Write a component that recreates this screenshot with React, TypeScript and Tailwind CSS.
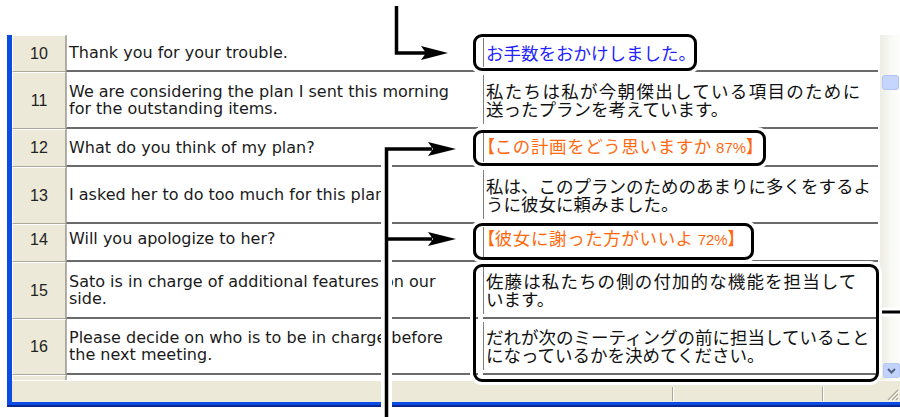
import React from "react";

type RowProps = {
  n: number;
  h: string;
  en: React.ReactNode;
  ja: React.ReactNode;
  up?: boolean;
};

function GridRow({ n, h, en, ja, up }: RowProps) {
  return (
    <div className={`flex ${h}`}>
      <div
        className={`w-[54px] shrink-0 flex items-center justify-center bg-[#ece9d8] border-l border-l-white border-t border-t-white border-b border-b-[#aca899] border-r border-r-[#aca899] font-['Liberation_Sans',sans-serif] text-[16px] text-[#222] ${up ? "pb-[7px]" : ""}`}
      >
        {n}
      </div>
      <div
        className={`w-[412px] shrink-0 flex items-center border-l border-l-[#b3b3b3] border-b-2 border-b-[#6b6b6b] pl-[2px] font-['DejaVu_Sans',sans-serif] text-[16px] leading-[17px] text-[#1a1a1a] ${up ? "pb-[7px]" : ""}`}
      >
        <div className="whitespace-nowrap">{en}</div>
      </div>
      <div className="w-[2px] shrink-0" />
      <div className="w-[398px] shrink-0 pl-[3px] flex">
        <div className="flex-1 flex items-stretch border-b-2 border-b-[#6b6b6b]">
          <div className="w-px bg-[#7d7d7d] my-[3px] shrink-0" />
          <div
            className={`flex items-center pl-[2px] font-['Noto_Sans_CJK_JP',sans-serif] text-[17.5px] leading-[18px] text-[#111] whitespace-nowrap ${up ? "pb-[7px]" : ""}`}
          >
            <div>{ja}</div>
          </div>
        </div>
      </div>
    </div>
  );
}

function Scrollbar() {
  return (
    <div className="w-[20px] h-[345px] shrink-0 flex flex-col bg-linear-to-r from-[#ecebe4] via-[#f8f8f4] to-[#fdfdfb]">
      <div className="mt-[40px] ml-[2px] w-[17px] h-[15px] rounded-[3px] bg-[#c6d5fc] border border-[#afc3f4]" />
      <div className="flex-1" />
      <div className="mb-[2px] ml-[3px] w-[17px] h-[15px] rounded-[2px] bg-[#c3d2fb] border border-[#b7c9f5] flex items-center justify-center">
        <svg width="9" height="6" viewBox="0 0 9 6">
          <path d="M1 1 L4.5 4.5 L8 1" fill="none" stroke="#4d6185" strokeWidth="2" />
        </svg>
      </div>
    </div>
  );
}

function StatusBar() {
  return (
    <div className="h-[22px] flex bg-[#ece9d8] border-t border-t-white">
      <div className="w-[660px] shrink-0" />
      <div className="w-[2px] shrink-0 mt-[6px] mb-[1px] border-l border-l-[#aca899] border-r border-r-white" />
      <div className="w-[148px] shrink-0" />
      <div className="w-[2px] shrink-0 mt-[6px] mb-[1px] border-l border-l-[#aca899] border-r border-r-white" />
      <div className="flex-1 flex items-end justify-end pr-[1px] pb-[1px]">
        <svg width="13" height="13" viewBox="0 0 13 13">
          <path d="M12 2 L2 12 M12 6 L6 12 M12 10 L10 12" stroke="#aca899" strokeWidth="1.2" />
          <path d="M13 3 L3 13 M13 7 L7 13 M13 11 L11 13" stroke="#ffffff" strokeWidth="1" />
        </svg>
      </div>
    </div>
  );
}

export default function App() {
  return (
    <div className="w-[900px] h-[417px] overflow-hidden bg-white relative">
      <div className="pt-[35px] pl-[7px]">
        <div className="flex">
          <div className="w-[5px] shrink-0 bg-[#0a4be3]" />
          <div className="w-[888px] shrink-0 flex flex-col">
            <div className="flex">
              <div className="w-[866px] shrink-0 flex flex-col">
                <GridRow
                  n={10}
                  h="h-[37px]"
                  en="Thank you for your trouble."
                  ja={<span className="text-[#2323ff]">お手数をおかけしました。</span>}
                />
                <GridRow
                  n={11}
                  h="h-[57px]"
                  en={
                    <>
                      <div>We are considering the plan I sent this morning</div>
                      <div>for the outstanding items.</div>
                    </>
                  }
                  ja={
                    <>
                      <div className="tracking-[1.3px]">私たちは私が今朝傑出している項目のために</div>
                      <div>送ったプランを考えています。</div>
                    </>
                  }
                />
                <GridRow
                  n={12}
                  h="h-[38px]"
                  en="What do you think of my plan?"
                  ja={
                    <span className="text-[#ff6a10]">
                      <span className="[font-feature-settings:'palt']">【</span>
                      <span className="tracking-[0.6px]">この計画をどう思いますか</span>
                      <span className="font-['Liberation_Sans',sans-serif] text-[15px]">{" 87%"}</span>
                      <span className="[font-feature-settings:'palt']">】</span>
                    </span>
                  }
                />
                <GridRow
                  n={13}
                  h="h-[57px]"
                  en="I asked her to do too much for this plan."
                  ja={
                    <>
                      <div>私は、このプランのためのあまりに多くをするよ</div>
                      <div>うに彼女に頼みました。</div>
                    </>
                  }
                />
                <GridRow
                  n={14}
                  h="h-[38px]"
                  up
                  en="Will you apologize to her?"
                  ja={
                    <span className="text-[#ff6a10]">
                      <span className="[font-feature-settings:'palt']">【</span>
                      <span className="tracking-[0.6px]">彼女に謝った方がいいよ</span>
                      <span className="font-['Liberation_Sans',sans-serif] text-[15px]">{" 72%"}</span>
                      <span className="[font-feature-settings:'palt']">】</span>
                    </span>
                  }
                />
                <GridRow
                  n={15}
                  h="h-[57px]"
                  en={
                    <>
                      <div>Sato is in charge of additional features on our</div>
                      <div>side.</div>
                    </>
                  }
                  ja={
                    <>
                      <div className="tracking-[1.1px]">佐藤は私たちの側の付加的な機能を担当して</div>
                      <div>います。</div>
                    </>
                  }
                />
                <GridRow
                  n={16}
                  h="h-[56px]"
                  en={
                    <>
                      <div>Please decide on who is to be in charge before</div>
                      <div>the next meeting.</div>
                    </>
                  }
                  ja={
                    <>
                      <div>だれが次のミーティングの前に担当していること</div>
                      <div>になっているかを決めてください。</div>
                    </>
                  }
                />
                <div className="flex h-[5px]">
                  <div className="w-[54px] shrink-0 bg-[#ece9d8] border-l border-l-white border-t border-t-white border-r border-r-[#aca899]" />
                  <div className="w-[412px] shrink-0 border-l border-l-[#b3b3b3]" />
                </div>
              </div>
              <div className="w-[2px] shrink-0" />
              <Scrollbar />
            </div>
            <StatusBar />
          </div>
        </div>
        <div className="h-[3px] bg-[#0a4be3]" />
        <div className="h-[2px] bg-[#0a2790]" />
      </div>

      {/* callout boxes */}
      <div className="absolute left-[473px] top-[34px] w-[224px] h-[37px] rounded-[9px] border-[3px] border-black shadow-[0_0_0_3px_#fff]" />
      <div className="absolute left-[473px] top-[130px] w-[293px] h-[36px] rounded-[9px] border-[3px] border-black shadow-[0_0_0_3px_#fff]" />
      <div className="absolute left-[473px] top-[223px] w-[281px] h-[37px] rounded-[9px] border-[3px] border-black shadow-[0_0_0_3px_#fff]" />
      <div className="absolute left-[473px] top-[264px] w-[406px] h-[118px] rounded-[9px] border-[3px] border-black shadow-[0_0_0_3px_#fff]" />

      {/* arrows */}
      <svg className="absolute left-0 top-0 pointer-events-none" width="900" height="417" viewBox="0 0 900 417">
        <path d="M386.5 149 L386.5 417" stroke="#fff" strokeWidth="11" fill="none" />
        <path d="M882 312 L900 312" stroke="#fff" strokeWidth="9" fill="none" />

        <path d="M396.5 6 L396.5 53 L426 53" stroke="#000" strokeWidth="3.5" fill="none" strokeLinejoin="miter" />
        <path d="M448 53 L421 46 L426 53 L421 60 Z" fill="#000" />

        <path d="M386.5 417 L386.5 149 L432 149" stroke="#000" strokeWidth="3.5" fill="none" strokeLinejoin="miter" />
        <path d="M456 149 L428 142 L433 149 L428 156 Z" fill="#000" />

        <path d="M386.5 239 L432 239" stroke="#000" strokeWidth="3.5" fill="none" />
        <path d="M456 239 L428 232 L433 239 L428 246 Z" fill="#000" />

        <path d="M882 312 L900 312" stroke="#000" strokeWidth="3" fill="none" />
      </svg>
    </div>
  );
}
